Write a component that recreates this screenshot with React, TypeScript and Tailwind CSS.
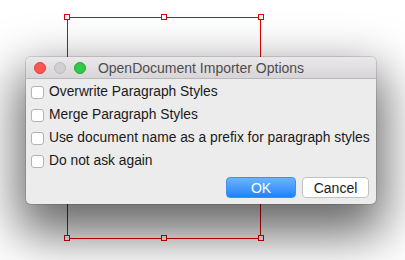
import React from 'react';

const options = [
  'Overwrite Paragraph Styles',
  'Merge Paragraph Styles',
  'Use document name as a prefix for paragraph styles',
  'Do not ask again',
];

function Handle({ className }: { className: string }) {
  return (
    <div
      className={`absolute w-[6px] h-[6px] bg-white border border-[#e00000] ${className}`}
    />
  );
}

export default function App() {
  return (
    <div
      className="relative w-[405px] h-[260px] bg-white overflow-hidden"
      style={{ fontFamily: '"Liberation Sans", Arial, sans-serif' }}
    >
      {/* selection frame behind the dialog */}
      <div className="absolute left-[67px] top-[17px] w-[194px] h-[222px] border border-[#e00000]" />
      <Handle className="left-[64px] top-[14px]" />
      <Handle className="left-[161px] top-[14px]" />
      <Handle className="left-[258px] top-[14px]" />
      <Handle className="left-[64px] top-[235px]" />
      <Handle className="left-[161px] top-[235px]" />
      <Handle className="left-[258px] top-[235px]" />

      {/* dialog window */}
      <div className="absolute left-[26px] top-[57px] w-[350px] h-[147px] rounded-[5px] bg-[#ececec] flex flex-col overflow-hidden shadow-[0_22px_50px_8px_rgba(0,0,0,0.6),0_0_0_1px_rgba(0,0,0,0.12)]">
        <div className="relative h-[22px] flex items-center justify-center bg-gradient-to-b from-[#ebe8eb] to-[#d8d5d8] border-b border-[#b9b7b9]">
          <div className="absolute left-[8px] top-[5px] flex gap-[8px]">
            <div className="w-[12px] h-[12px] rounded-full bg-[#fc5753] border border-[#df3e3a]" />
            <div className="w-[12px] h-[12px] rounded-full bg-[#d0ced0] border border-[#bebcbe]" />
            <div className="w-[12px] h-[12px] rounded-full bg-[#34c84a] border border-[#20a535]" />
          </div>
          <span className="text-[14px] text-[#4d4d4d] leading-none pt-[1px]">
            OpenDocument Importer Options
          </span>
        </div>

        <div className="flex flex-col pl-[5px] pt-[2px]">
          {options.map(label => (
            <label key={label} className="flex items-center gap-[5px] h-[23px]">
              <span className="w-[13px] h-[13px] rounded-[3px] bg-white border border-[#b3b3b3]" />
              <span className="text-[13.8px] text-[#1a1a1a]">{label}</span>
            </label>
          ))}
        </div>

        <div className="flex justify-end gap-[6px] pr-[7px] mt-[4px]">
          <button className="w-[70px] h-[21px] rounded-[4px] bg-gradient-to-b from-[#6cb3fa] to-[#1a82fb] border border-[#3d8ff0] text-white text-[14px] leading-none">
            OK
          </button>
          <button className="w-[67px] h-[21px] rounded-[4px] bg-white border border-[#c2c2c2] text-[#1a1a1a] text-[14px] leading-none">
            Cancel
          </button>
        </div>
      </div>
    </div>
  );
}
